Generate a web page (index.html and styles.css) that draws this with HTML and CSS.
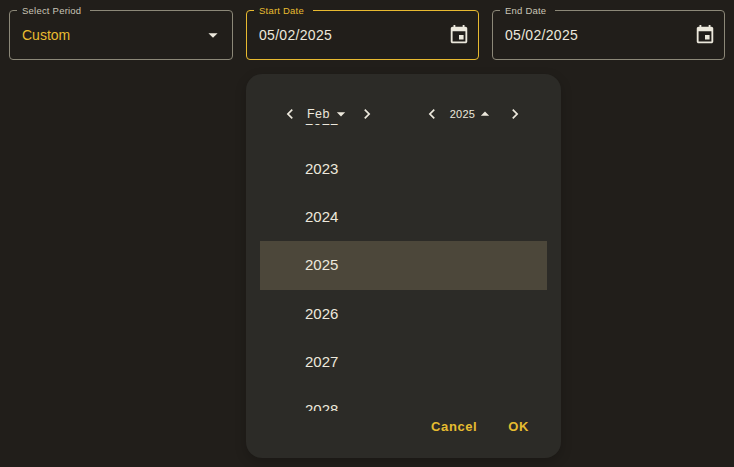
FILE: index.html
```html
<!DOCTYPE html>
<html lang="en">
<head>
    <meta charset="UTF-8">
    <meta name="viewport" content="width=device-width, initial-scale=1.0">
    <title>Select Period</title>
    <link rel="stylesheet" href="styles.css">
</head>
<body>

    <div class="filters">
        <fieldset class="field">
            <legend>Select Period</legend>
            <span class="field-value gold">Custom</span>
            <svg class="arrow" width="22" height="22" viewBox="0 0 24 24"><path d="M7 10l5 5 5-5z"/></svg>
        </fieldset>
        <fieldset class="field focused">
            <legend>Start Date</legend>
            <span class="field-value">05/02/2025</span>
            <svg class="calendar" width="22" height="22" viewBox="0 0 24 24"><path d="M17 12h-5v5h5v-5zM16 1v2H8V1H6v2H5c-1.11 0-1.99.9-1.99 2L3 19c0 1.1.89 2 2 2h14c1.1 0 2-.9 2-2V5c0-1.1-.9-2-2-2h-1V1h-2zm3 18H5V8h14v11z"/></svg>
        </fieldset>
        <fieldset class="field">
            <legend>End Date</legend>
            <span class="field-value">05/02/2025</span>
            <svg class="calendar" width="22" height="22" viewBox="0 0 24 24"><path d="M17 12h-5v5h5v-5zM16 1v2H8V1H6v2H5c-1.11 0-1.99.9-1.99 2L3 19c0 1.1.89 2 2 2h14c1.1 0 2-.9 2-2V5c0-1.1-.9-2-2-2h-1V1h-2zm3 18H5V8h14v11z"/></svg>
        </fieldset>
    </div>

    <div class="picker">
        <div class="picker-header">
            <div class="switcher month-switcher">
                <svg class="chevron" width="20" height="20" viewBox="0 0 24 24"><path d="M15.41 7.41 14 6l-6 6 6 6 1.41-1.41L10.83 12z"/></svg>
                <span class="month-label">Feb</span>
                <svg class="caret" width="20" height="20" viewBox="0 0 24 24"><path d="M7 10l5 5 5-5z"/></svg>
                <svg class="chevron" width="20" height="20" viewBox="0 0 24 24"><path d="M10 6 8.59 7.41 13.17 12l-4.58 4.59L10 18l6-6z"/></svg>
            </div>
            <div class="switcher year-switcher">
                <svg class="chevron" width="20" height="20" viewBox="0 0 24 24"><path d="M15.41 7.41 14 6l-6 6 6 6 1.41-1.41L10.83 12z"/></svg>
                <span class="year-label">2025</span>
                <svg class="caret" width="20" height="20" viewBox="0 0 24 24"><path d="M7 14l5-5 5 5z"/></svg>
                <svg class="chevron" width="20" height="20" viewBox="0 0 24 24"><path d="M10 6 8.59 7.41 13.17 12l-4.58 4.59L10 18l6-6z"/></svg>
            </div>
        </div>

        <div class="year-list">
            <div class="year-rows">
                <div class="year-row">2022</div>
                <div class="year-row">2023</div>
                <div class="year-row">2024</div>
                <div class="year-row selected">2025</div>
                <div class="year-row">2026</div>
                <div class="year-row">2027</div>
                <div class="year-row">2028</div>
            </div>
        </div>

        <div class="picker-actions">
            <button class="action-button">Cancel</button>
            <button class="action-button">OK</button>
        </div>
    </div>

</body>
</html>
```

FILE: styles.css
```css
html, body {
    height: 100%;
}

body {
    font-family: 'Liberation Sans', Arial, sans-serif;
    margin: 0;
    background-color: #211e1a;
    color: #ece8dc;
    overflow: hidden;
}

/* --- Top filters --- */
.filters {
    display: grid;
    grid-template-columns: 224px 233px 233px;
    gap: 13px;
    padding: 5px 9px 0;
}

.field {
    display: flex;
    align-items: center;
    justify-content: space-between;
    box-sizing: border-box;
    height: 55px;
    min-width: 0;
    margin: 0;
    padding: 0 8px 5px 7px;
    border: 1px solid #8c8878;
    border-radius: 4px;
}

.field legend {
    padding: 0 9px 0 5px;
    font-size: 9.5px;
    line-height: 11px;
    letter-spacing: 0.22px;
    color: #c9c5b6;
}

.field.focused {
    border-color: #e8ba30;
}

.field.focused legend {
    color: #e8bc30;
}

.field-value {
    padding-left: 5px;
    font-size: 14px;
    letter-spacing: 0.3px;
    line-height: 24px;
}

.field-value.gold {
    color: #e8bc30;
    letter-spacing: 0;
}

.arrow, .calendar {
    flex: none;
    fill: #ece8dc;
}

/* --- Date picker popup --- */
.picker {
    position: absolute;
    left: 246px;
    top: 74px;
    width: 315px;
    height: 384px;
    display: flex;
    flex-direction: column;
    background-color: #2c2b27;
    border-radius: 16px;
    box-shadow: 0 4px 12px rgba(0, 0, 0, 0.2);
}

.picker-header {
    display: flex;
    height: 50px;
    flex: none;
    padding-left: 34px;
    box-sizing: border-box;
    align-items: flex-end;
    gap: 45px;
}

.switcher {
    display: flex;
    align-items: center;
    height: 20px;
}

.chevron, .caret {
    flex: none;
    fill: #ece8dc;
}

.month-label {
    margin-left: 7px;
    font-size: 12.5px;
    letter-spacing: 0.4px;
}

.month-switcher .caret {
    margin-left: 1px;
}

.month-switcher .chevron:last-child {
    margin-left: 6px;
}

.year-label {
    margin-left: 8px;
    font-size: 11px;
    letter-spacing: 0.2px;
}

.year-switcher .chevron:last-child {
    margin-left: 10px;
}

/* Year list is scrolled, the first and last rows are cut off */
.year-list {
    flex: none;
    height: 287px;
    margin: 0 14px;
    overflow: hidden;
}

.year-rows {
    margin-top: -27.7px;
}

.year-row {
    height: 48.3px;
    line-height: 48.3px;
    padding-left: 45px;
    font-size: 15px;
}

.year-row.selected {
    background-color: #4c473a;
}

.picker-actions {
    display: flex;
    justify-content: flex-end;
    gap: 31px;
    padding: 8px 32px 0 0;
}

.action-button {
    padding: 0;
    border: none;
    background: none;
    color: #e6bc30;
    font-family: inherit;
    font-size: 13px;
    font-weight: bold;
    letter-spacing: 0.6px;
}
```
